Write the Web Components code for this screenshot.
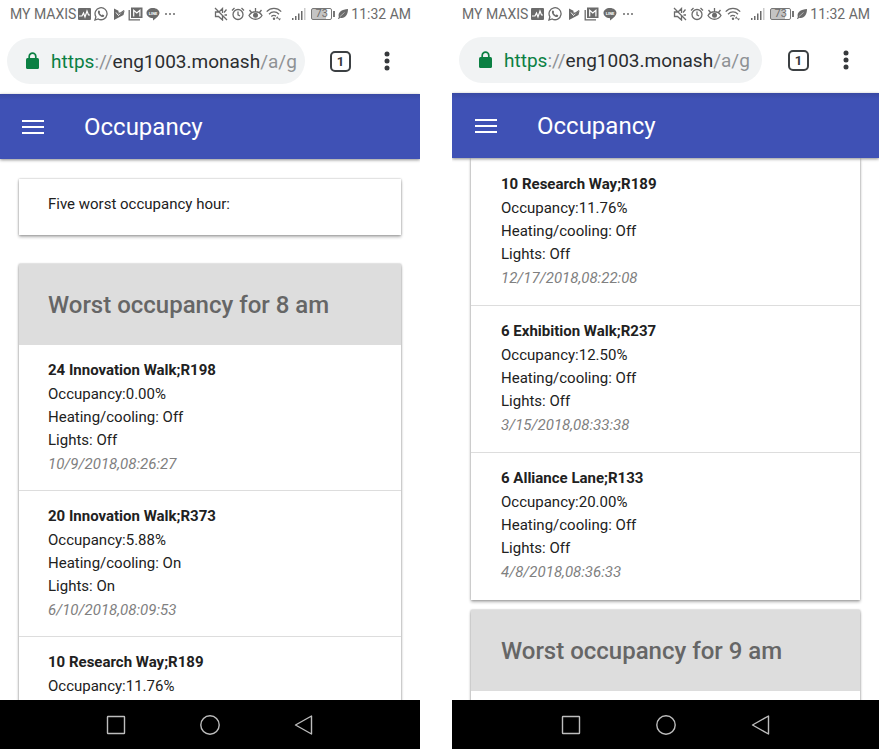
<!DOCTYPE html>
<html lang="en">
<head>
<meta charset="utf-8">
<meta name="viewport" content="width=device-width, initial-scale=1">
<title>Occupancy</title>
<style>
  html, body { height: 100%; margin: 0; }
  body {
    box-sizing: border-box;
    display: grid;
    grid-template-columns: 420fr 427fr;
    gap: 32px;
    padding: 0 1px 1px 0;
    background: #fff;
    color: #212121;
    font-family: Roboto, "Liberation Sans", sans-serif;
    font-size: 15px;
    overflow: hidden;
  }
  #second {
    --status-height: 27px; --inset: 30px; --icon-gap: 4px; --tab-gap: 26px; --menu-gap: 27px;
    --entry-height: 147px; --url-inset: 20px; --header-inset: 23px; --nav-gap: 73px;
  }
</style>
</head>
<body>
<phone-screen id="first">
  <status-bar slot="top"></status-bar>
  <browser-bar slot="top"></browser-bar>
  <app-header slot="top">Occupancy</app-header>
  <note-card>Five worst occupancy hour:</note-card>
  <occupancy-card>
    <span slot="title">Worst occupancy for 8 am</span>
    <occupancy-entry room="24 Innovation Walk;R198" occupancy="0.00%" heating="Off" lights="Off" time="10/9/2018,08:26:27"></occupancy-entry>
    <occupancy-entry room="20 Innovation Walk;R373" occupancy="5.88%" heating="On" lights="On" time="6/10/2018,08:09:53"></occupancy-entry>
    <occupancy-entry room="10 Research Way;R189" occupancy="11.76%"></occupancy-entry>
  </occupancy-card>
  <nav-bar slot="bottom"></nav-bar>
</phone-screen>
<phone-screen id="second" scrolled>
  <status-bar slot="top"></status-bar>
  <browser-bar slot="top"></browser-bar>
  <app-header slot="top">Occupancy</app-header>
  <occupancy-card continued>
    <occupancy-entry room="10 Research Way;R189" occupancy="11.76%" heating="Off" lights="Off" time="12/17/2018,08:22:08"></occupancy-entry>
    <occupancy-entry room="6 Exhibition Walk;R237" occupancy="12.50%" heating="Off" lights="Off" time="3/15/2018,08:33:38"></occupancy-entry>
    <occupancy-entry room="6 Alliance Lane;R133" occupancy="20.00%" heating="Off" lights="Off" time="4/8/2018,08:36:33"></occupancy-entry>
  </occupancy-card>
  <occupancy-card>
    <span slot="title">Worst occupancy for 9 am</span>
    <occupancy-entry></occupancy-entry>
  </occupancy-card>
  <nav-bar slot="bottom"></nav-bar>
</phone-screen>

<script>
const define = (name, html, setup) => {
  const template = document.createElement('template');
  template.innerHTML = html;
  customElements.define(name, class extends HTMLElement {
    constructor() {
      super();
      this.attachShadow({ mode: 'open' }).append(template.content.cloneNode(true));
    }
    connectedCallback() { if (setup) setup(this, this.shadowRoot); }
  });
};

define('phone-screen', `
<style>
  :host { display: flex; flex-direction: column; min-width: 0; min-height: 0; height: 100%; overflow: hidden; }
  main { flex: 1; min-height: 0; overflow: hidden; padding: 20px 19px 0; display: flex; flex-direction: column; gap: 29px; }
  :host([scrolled]) main { padding-top: 0; gap: 10px; }
</style>
<slot name="top"></slot>
<main><slot></slot></main>
<slot name="bottom"></slot>`);

define('status-bar', `
<style>
  :host { display: flex; justify-content: space-between; align-items: center; height: var(--status-height, 28px);
    padding: 0 9px 0 10px; color: #6b6b6b; font-size: 14px; flex: none; white-space: nowrap; }
  div { display: flex; align-items: center; gap: 3px; }
  .left { gap: var(--icon-gap, 3px); }
  .left span { margin-right: -1px; }
  svg { display: block; flex: none; fill: none; stroke: currentColor; stroke-width: 1.3; }
  .solid { fill: currentColor; stroke: none; }
  .play { margin-left: 2px; }
  .signal { margin-left: 7px; }
  .battery { display: flex; align-items: center; gap: 1px; margin-left: 2px; }
  .battery b { box-sizing: border-box; width: 21px; height: 12px; border: 1px solid #777; border-radius: 2px;
    background: linear-gradient(90deg, #c4c4c4 75%, #fff 75%); font: 11px/10px Roboto, sans-serif; text-align: center; }
  .battery i { width: 2px; height: 6px; background: #777; }
</style>
<div class="left">
  <span>MY MAXIS</span>
  <svg width="13" height="12" viewBox="0 0 13 12"><rect width="13" height="12" rx="1" class="solid"/><path d="M1 8h3l1.500-3 1.500 4 2-6 1.500 4H12" stroke="#fff" stroke-width="1.200"/></svg>
  <svg width="14" height="14" viewBox="0 0 14 14"><path d="M1 13l.9-3.200A6 6 0 1 1 4.200 12z"/><path class="solid" d="M4.600 3.600c.5-.4 1 0 1.100.4l.4 1c.1.4-.2.7-.5 1.100.5 1 1.200 1.700 2.200 2.100.4-.5.7-.8 1-.6l1.200.7c.4.2.2.8-.1 1.200-.6.7-1.600.7-2.600.2-1.500-.7-2.700-2-3.200-3.400-.4-1-.2-2.100.5-2.700z"/></svg>
  <svg class="play" width="12" height="14" viewBox="0 0 12 14"><path class="solid" d="M1 1.500l4.500 2.300v3L11.500 4l-1 4L1 13z"/><path d="M3 5.500l2.500 3L11 3.200" stroke="#fff" stroke-width="1"/><path d="M5.500 5.500l1 1.200 4.700-3.200" stroke-width="1.200"/></svg>
  <svg width="15" height="14" viewBox="0 0 15 14"><path d="M1.200 3v9.800H12"/><rect x="3" y=".5" width="11.500" height="10.500" class="solid"/><path d="M5.700 9.500V3.300l3.100 2.700 3.100-2.700v6.200" stroke="#fff" stroke-width="1.200"/></svg>
  <svg width="14" height="14" viewBox="0 0 14 14"><path class="solid" d="M7 1c3.600 0 6.500 2.200 6.500 5 0 2.500-3 4.900-6.300 7.500L6.800 11C3.300 11 .5 8.900.5 6S3.400 1 7 1z"/><text x="7" y="7.500" fill="#fff" stroke="none" font-size="4" font-weight="700" text-anchor="middle">LINE</text></svg>
  <svg width="14" height="4" viewBox="0 0 14 4"><g class="solid"><circle cx="3" cy="2" r="1"/><circle cx="7" cy="2" r="1"/><circle cx="11" cy="2" r="1"/></g></svg>
</div>
<div class="right">
  <svg width="14" height="14" viewBox="0 0 14 14"><path d="M8.500 6V1.500L5.500 4.500M4.500 5H1.500v4.500h3l4 3.500V9M1 1l12 12M10 5.500l2.500-3M10.500 8H13"/></svg>
  <svg width="14" height="14" viewBox="0 0 14 14"><circle cx="7" cy="7.500" r="5"/><path d="M7 4.500v3.300L9 9M1 3.500L3.500 1M13 3.500L10.500 1"/></svg>
  <svg width="15" height="14" viewBox="0 0 15 14"><path d="M1 8.500c3-5 10-5 13 0-3 5-10 5-13 0zM7.500 4.500V1M3.500 5.500l-2-2.500M11.500 5.500l2-2.500"/><circle cx="7.500" cy="8.300" r="2.500" class="solid"/></svg>
  <svg width="16" height="14" viewBox="0 0 16 14"><path d="M.7 4.600c4-4.200 10.500-4.200 14.500 0M3 7.200c3-3 7-3 10 0M5.300 9.600c1.500-1.400 3.200-1.500 4.700-.5"/><circle cx="8" cy="11.800" r="1.200" class="solid"/><path class="solid" d="M11.300 9.200l1.500 2.300H9.800zM13.500 13.500L12 11.500h3z"/></svg>
  <svg class="signal" width="14" height="12" viewBox="0 0 14 12"><path class="solid" d="M0 10h1.500v2H0zM3 8h1.500v4H3zM6 5.500h1.500V12H6zM9 3h1.500v9H9z"/><path class="solid" opacity=".35" d="M12 0h1.500v12H12z"/></svg>
  <span class="battery"><b>73</b><i></i></span>
  <svg width="10" height="10" viewBox="0 0 10 10"><path class="solid" d="M0 10l.8-2C-.3 3.500 3 .5 10 0c0 6.500-3.500 10-8 8.700L1 10z"/><path d="M2 7.500L6.500 3.500" stroke="#fff" stroke-width=".5"/></svg>
  <span>11:32 AM</span>
</div>`);

define('browser-bar', `
<style>
  :host { display: flex; align-items: center; height: 66px; padding: 0 23px 0 7px; flex: none; color: #36393c; }
  button { border: 0; background: none; margin: 0; padding: 0; font: inherit; color: inherit; }
  .url { flex: 1; min-width: 0; height: 46px; border-radius: 23px; background: #f1f3f4; display: flex; align-items: center;
    gap: 12px; padding: 0 6px 0 var(--url-inset, 19px); font-size: 19px; color: #2b2d30; white-space: nowrap; overflow: hidden; }
  .scheme { color: #0b8043; } .dim { color: #8e9194; }
  .tabs { box-sizing: border-box; width: 21px; height: 21px; border: 2px solid #3c4043; border-radius: 5px;
    margin-left: var(--tab-gap, 25px); font-size: 13px; font-weight: 700; line-height: 17px; text-align: center; }
  .more { width: 20px; height: 22px; margin-left: var(--menu-gap, 26px); }
  svg { display: block; flex: none; margin: auto; }
  .url svg { margin: 0; }
</style>
<button class="url" aria-label="Address">
  <svg width="13" height="18" viewBox="0 0 13 18"><rect y="6" width="13" height="11" rx="1.500" fill="#0b8043"/><path d="M3.200 7V4.500a3.300 3.300 0 0 1 6.600 0V7" fill="none" stroke="#0b8043" stroke-width="1.700"/></svg>
  <span><span class="scheme">https</span><span class="dim">://</span>eng1003.monash<span class="dim">/a/g</span></span>
</button>
<button class="tabs" aria-label="Open tabs">1</button>
<button class="more" aria-label="More options"><svg width="6" height="20" viewBox="0 0 6 20" fill="#36393c"><circle cx="3" cy="3" r="2.500"/><circle cx="3" cy="10" r="2.500"/><circle cx="3" cy="17" r="2.500"/></svg></button>`);

define('app-header', `
<style>
  :host { display: flex; align-items: center; gap: 40px; height: 65px; padding: 0 var(--header-inset, 22px); flex: none; position: relative; z-index: 1;
    box-sizing: border-box; background: linear-gradient(#3949a3, #3f51b5 6px); color: #fff;
    box-shadow: 0 1px 3px rgba(0,0,0,.45); }
  button { border: 0; background: none; padding: 0; margin: 0; color: inherit; }
  svg { display: block; }
  h1 { margin: 0; font-size: 24px; font-weight: 400; line-height: 32px; }
</style>
<button aria-label="Menu"><svg width="22" height="16" viewBox="0 0 22 16" fill="#fff"><path d="M0 1h22v2H0zM0 7h22v2H0zM0 13h22v2H0z"/></svg></button>
<h1><slot></slot></h1>`);

define('note-card', `
<style>
  :host { display: block; flex: none; box-sizing: border-box; padding: 13px var(--inset, 29px) 19px; line-height: 24px; background: #fff;
    box-shadow: 0 0 2px rgba(0,0,0,.3), 0 2px 3px rgba(0,0,0,.3); }
</style><slot></slot>`);

define('occupancy-card', `
<style>
  :host { display: block; flex: none; background: #fff; box-shadow: 0 0 2px rgba(0,0,0,.3), 0 2px 3px rgba(0,0,0,.3); }
  h2 { margin: 0; padding: 25px var(--inset, 29px) 24px; background: #ddd; color: #666; font-size: 24px; font-weight: 500; line-height: 32px; }
  :host([continued]) { padding-top: 1px; }
  :host([continued]) h2 { display: none; }
</style>
<h2><slot name="title"></slot></h2>
<slot></slot>`);

define('occupancy-entry', `
<style>
  :host { display: block; box-sizing: border-box; min-height: var(--entry-height, 146px); padding: 13px var(--inset, 29px) 14px; border-bottom: 1px solid #ddd; line-height: 23px; }
  :host(:last-child) { border-color: transparent; }
  p { margin: 0; }
  .room { font-weight: 700; }
  .room, .occupancy, .time { line-height: 24px; }
  .time { color: #808080; font-style: italic; }
</style>
<p class="room"></p><p class="occupancy"></p><p class="heating"></p><p class="lights"></p><p class="time"></p>`,
(host, root) => {
  const labels = { room: '', occupancy: 'Occupancy:', heating: 'Heating/cooling: ', lights: 'Lights: ', time: '' };
  for (const [key, label] of Object.entries(labels)) {
    if (host.hasAttribute(key)) root.querySelector('.' + key).textContent = label + host.getAttribute(key);
  }
});

define('nav-bar', `
<style>
  :host { display: flex; justify-content: center; align-items: center; gap: var(--nav-gap, 72px); height: 49px; flex: none; background: #000; position: relative; }
  button { border: 0; background: none; margin: 0; padding: 0; }
  svg { display: block; fill: none; stroke: #bdbdbd; stroke-width: 1.400; }
</style>
<button aria-label="Recent apps"><svg width="22" height="22" viewBox="0 0 22 22"><rect x="2.500" y="2.500" width="17" height="17" rx=".5"/></svg></button>
<button aria-label="Home"><svg width="22" height="22" viewBox="0 0 22 22"><circle cx="11" cy="11" r="9.200"/></svg></button>
<button aria-label="Back"><svg width="22" height="22" viewBox="0 0 22 22"><path d="M18.500 2v18L2.500 11z" stroke-linejoin="round"/></svg></button>`);
</script>
</body>
</html>
